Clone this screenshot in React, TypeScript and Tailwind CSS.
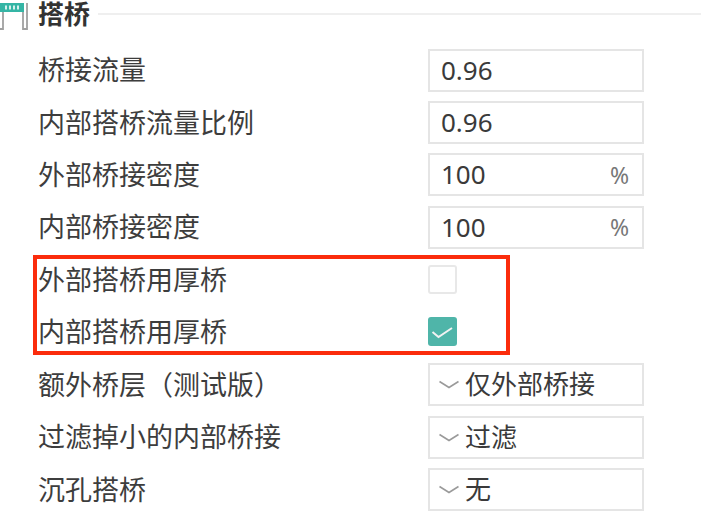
const font = { fontFamily: '"Noto Sans", "Noto Sans CJK SC", sans-serif' };

function Label({ children }: { children: string }) {
  return <div className="w-[390px] shrink-0 text-[27px] leading-[36px] text-[#3d3d3d]">{children}</div>;
}

function InputRow({ label, value, unit }: { label: string; value: string; unit?: string }) {
  return (
    <div className="flex h-[52.4px] items-center">
      <Label>{label}</Label>
      <div className="flex h-[43px] w-[216px] items-center justify-between border-2 border-[#e5e5e5] pl-[11px] pr-[13px] text-[26px] text-[#3a3a3a]">
        <span>{value}</span>
        {unit && <span className="text-[23px] text-[#777777]">{unit}</span>}
      </div>
    </div>
  );
}

function SelectRow({ label, value }: { label: string; value: string }) {
  return (
    <div className="flex h-[52.4px] items-center">
      <Label>{label}</Label>
      <div className="flex h-[43px] w-[216px] items-center border-2 border-[#e5e5e5] pl-[9px] text-[26px] text-[#3a3a3a]">
        <svg width="20" height="10" viewBox="0 0 20 10" fill="none" className="mr-[6px] mt-[1px] shrink-0">
          <path d="M0.5 1.5 L10 7.5 L19.5 1.5" stroke="#9a9a9a" strokeWidth="1.6" />
        </svg>
        <span>{value}</span>
      </div>
    </div>
  );
}

function CheckRow({ label, checked }: { label: string; checked?: boolean }) {
  return (
    <div className="flex h-[36px] items-center">
      <Label>{label}</Label>
      {checked ? (
        <div className="flex h-[29px] w-[29px] items-center justify-center rounded-[3px] bg-[#4fb5a9]">
          <svg width="23" height="15" viewBox="0 0 23 15" fill="none">
            <path d="M1.5 8 L7.5 13 L21 4" stroke="#f2f2f2" strokeWidth="2" />
          </svg>
        </div>
      ) : (
        <div className="h-[29px] w-[29px] rounded-[3px] border-2 border-[#e8e8e8] bg-white" />
      )}
    </div>
  );
}

export default function App() {
  return (
    <div style={font} className="h-[519px] w-[701px] overflow-hidden bg-white">
      <div className="flex h-[30px] items-start">
        <svg width="29" height="30" viewBox="0 0 29 30" fill="none" className="shrink-0">
          <path d="M3 12 V29 H0 M23 12 V29 H27 V3" stroke="#a0a0a0" strokeWidth="1.8" />
          <rect x="0" y="3" width="24" height="9" fill="#35b5a5" />
          <path d="M6 5.5 V9.5 M10 5.5 V9.5 M14 5.5 V9.5 M18 5.5 V9.5" stroke="#ffffff" strokeWidth="1.6" />
        </svg>
        <div className="ml-[9px] text-[26px] font-bold leading-[28px] text-[#333333]">搭桥</div>
        <div className="ml-2 mt-[13px] h-[2px] flex-1 bg-[#efefef]" />
      </div>
      <div className="mt-[14px] pl-[38px]">
        <InputRow label="桥接流量" value="0.96" />
        <InputRow label="内部搭桥流量比例" value="0.96" />
        <InputRow label="外部桥接密度" value="100" unit="%" />
        <InputRow label="内部桥接密度" value="100" unit="%" />
        <div className="ml-[-5px] mt-[1.4px] flex w-[477px] flex-col gap-[16px] border-4 border-[#fb2c0c] pb-[1px] pl-[1px] pt-[3px]">
          <CheckRow label="外部搭桥用厚桥" />
          <CheckRow label="内部搭桥用厚桥" checked />
        </div>
        <div className="mt-[3.8px]">
          <SelectRow label="额外桥层（测试版）" value="仅外部桥接" />
          <SelectRow label="过滤掉小的内部桥接" value="过滤" />
          <SelectRow label="沉孔搭桥" value="无" />
        </div>
      </div>
    </div>
  );
}
